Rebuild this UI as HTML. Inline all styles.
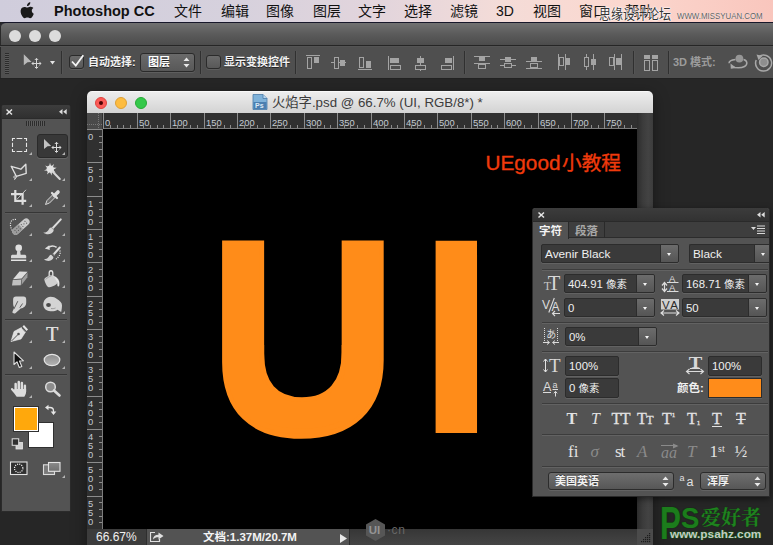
<!DOCTYPE html>
<html lang="zh">
<head>
<meta charset="utf-8">
<title>Photoshop CC</title>
<style>
*{box-sizing:border-box;margin:0;padding:0}
html,body{width:773px;height:545px;overflow:hidden;background:#262626}
body{position:relative;font-family:"Liberation Sans","Noto Sans CJK SC",sans-serif;font-size:12px;color:#fff}
.abs{position:absolute}
#menubar{left:0;top:0;width:773px;height:22px;background:linear-gradient(90deg,#d0cddc 0%,#d6d1dd 30%,#e3d5dc 50%,#f4dcd8 65%,#fbd8cf 80%,#f9c6bd 100%);color:#111;font-size:14px;line-height:22px;white-space:nowrap}
#menubar span{position:absolute;top:0}
#appwin{left:0;top:22px;width:773px;height:523px;background:#262626;overflow:hidden}
#apptitle{left:0;top:0;width:773px;height:24px;background:linear-gradient(#717171,#5b5b5b 50%,#4c4c4c);border-top:1px solid #17172a;border-bottom:1px solid #262626;box-shadow:inset 1px 0 0 #2a2a2a;border-top-left-radius:5px}
.gl{position:absolute;width:12px;height:12px;border-radius:50%;background:#dcdcdc;top:7px}
#optbar{left:0;top:24px;width:773px;height:33px;background:#4f4f4f;border-top:1px solid #545454;border-bottom:1px solid #222;box-shadow:inset 1px 0 0 #2a2a2a}

.sep{position:absolute;width:2px;top:4px;height:23px;border-left:1px solid #303030;border-right:1px solid #555}
.cb{position:absolute;top:8px;width:15px;height:14px;border:1px solid #2b2b2b;border-radius:3px;background:linear-gradient(#6a6a6a,#585858);box-shadow:0 1px 0 #5e5e5e}
.olab{position:absolute;top:0;line-height:31px;font-size:11px;font-weight:bold;color:#f2f2f2;white-space:nowrap;text-shadow:0 1px 0 #222}
.oi{position:absolute;top:0}

#doc{left:87px;top:69px;width:566px;height:460px;background:#000;border-radius:5px 5px 0 0;overflow:hidden;box-shadow:0 4px 16px rgba(0,0,0,.4)}
#doctitle{left:0;top:0;width:566px;height:22px;background:linear-gradient(#ededed,#d3d3d3);border-top:1px solid #f8f8f8;color:#3c3c3c;font-size:13.300px;line-height:21px;white-space:nowrap}
.tl{position:absolute;top:5px;width:12px;height:12px;border-radius:50%}
#hr{left:0;top:22px;width:550px;height:16px;background:#303030;overflow:hidden;font-size:9.400px;line-height:9px;color:#c4cbd3}
#vr{left:0;top:38px;width:16px;height:400px;background:#303030;overflow:hidden;font-size:9.400px;color:#c4cbd3;line-height:9.100px;border-right:1px solid #7c7c7c}
#hr i,#vr i{position:absolute;background:#8c8c8c}
#hr b,#vr b{position:absolute;font-weight:normal}
#hr b{transform:scaleY(1.06);transform-origin:0 90%}
#vscroll{left:550px;top:22px;width:16px;height:416px;background:linear-gradient(90deg,#2c2c2c,#3b3b3b 35%,#434343 70%,#3c3c3c)}
#status{left:0;top:438px;width:550px;height:22px;background:#535353}

#tools{left:1px;top:83px;width:70px;height:407px;background:#535353;border:1px solid #2b2b2b;border-top-color:#3c3c3c;border-radius:3px 3px 0 0;overflow:hidden}
#tools .hd{left:0;top:0;width:68px;height:13px;background:linear-gradient(#3c3c3c,#303030);border-bottom:1px solid #2b2b2b}
#tools .ts{position:absolute;left:3px;width:62px;height:2px;border-top:1px solid #363636;border-bottom:1px solid #5a5a5a}
#tools svg{position:absolute;overflow:visible}
.tri{position:absolute;width:0;height:0;border-left:3px solid transparent;border-bottom:3px solid #b4b4b4}

#chr{left:532px;top:186px;width:238px;height:289px;border-radius:3px 3px 0 0;background:#535353;border:1px solid #2a2a2a;border-top:0;box-shadow:0 2px 6px rgba(0,0,0,.5);font-size:11.400px;color:#f0f0f0;overflow:hidden}
#chr .hd{left:0;top:0;width:236px;height:13px;background:linear-gradient(#3c3c3c,#323232);border-radius:2px 2px 0 0}
#chr .tabs{left:0;top:13px;width:236px;height:17px;background:#3e3e3e;border-top:1px solid #2a2a2a;border-bottom:1px solid #2c2c2c}
#chr .tab{position:absolute;top:0;height:16px;font-size:11.500px;line-height:18px;font-weight:bold;text-align:center;border-right:1px solid #2a2a2a}
#chr .fld{position:absolute;background:#3a3a3a;border:1px solid #2c2c2c;box-shadow:0 1px 0 #626262;line-height:19px;padding-left:3px;white-space:nowrap;overflow:hidden;border-radius:2px}
#chr .btn{position:absolute;right:0;top:0;bottom:0;width:18px;background:linear-gradient(#6c6c6c,#555);border-left:1px solid #2c2c2c}
#chr .btn:after{content:"";position:absolute;left:6px;top:8px;border:2.500px solid transparent;border-top:3.500px solid #f4f4f4;border-bottom:0}
#chr .ln{position:absolute;left:8px;width:226px;height:2px;border-top:1px solid #3c3c3c;border-bottom:1px solid #626262}
#chr svg{position:absolute;overflow:visible}
#chr .pop{position:absolute;height:18px;border:1px solid #2c2c2c;border-radius:3px;background:linear-gradient(#6e6e6e,#575757);box-shadow:0 1px 0 #626262;font-size:11px;font-weight:bold;line-height:16px;padding-left:6px;text-shadow:0 -1px 0 #3a3a3a}
#chr .gly{position:absolute;font-family:"Liberation Serif",serif;color:#e2e2e2;white-space:nowrap;line-height:1}
#chr .cj{font-size:10.500px}
</style>
</head>
<body>
<div id="menubar" class="abs">
<svg class="abs" style="left:20px;top:2px" width="15" height="18" viewBox="0 0 15 18"><path fill="#1a1a1a" d="M10.3 0.3c0.1 1-0.3 1.9-0.9 2.6-0.6 0.7-1.500 1.200-2.400 1.100-0.100-0.900 0.300-1.900 0.900-2.500 0.600-0.700 1.600-1.200 2.400-1.200zM13.400 6.100c-1 0.600-1.600 1.500-1.600 2.700 0 1.400 0.800 2.500 2 3-0.300 0.900-0.700 1.700-1.200 2.400-0.700 1-1.400 2-2.500 2-1.100 0-1.400-0.700-2.700-0.700-1.300 0-1.700 0.700-2.700 0.700-1.100 0-1.900-1.100-2.600-2.100-1.400-2.100-2.100-5.300-0.900-7.300 0.700-1.200 1.900-1.900 3.200-1.900 1.100 0 2 0.700 2.700 0.700 0.700 0 1.800-0.800 3.100-0.800 0.500 0 2.200 0.100 3.200 1.300z"/></svg>
<span style="left:54px;font-weight:bold;font-size:14.5px" id="mPs">Photoshop CC</span>
<span style="left:174px">文件</span><span style="left:221px">编辑</span><span style="left:266px">图像</span><span style="left:313px">图层</span><span style="left:358px">文字</span><span style="left:404px">选择</span><span style="left:450px">滤镜</span><span style="left:496px">3D</span><span style="left:533px">视图</span><span style="left:579px">窗口</span><span style="left:625px">帮助</span>
<span id="wm1" style="left:599px;top:6px;font-size:12px;line-height:18px;color:#333;transform:scaleY(1.12);text-shadow:0 0 1px #fff,0 0 1px #fff,0 0 2px #fff,0 0 2px #fff">思缘设计论坛</span>
<span id="wm2" style="left:677px;top:11px;font-size:8.500px;line-height:11px;color:#5e5e5e;transform:scaleX(0.925);transform-origin:0 50%;text-shadow:0 0 1px #fff">WWW.MISSYUAN.COM</span>
</div>
<div id="appwin" class="abs">
  <div id="apptitle" class="abs"><i class="gl" style="left:9px"></i><i class="gl" style="left:29px"></i><i class="gl" style="left:49px"></i></div>
  <div id="optbar" class="abs">
<i class="abs" style="left:5px;top:6px;width:4px;height:21px;background:repeating-linear-gradient(#2c2c2c 0 1px,#5a5a5a 1px 2px)"></i>
<svg class="oi" style="left:22px;top:6px" width="22" height="18" viewBox="0 0 22 18"><path d="M1.800 1.300V12.200L5.500 9.300L9.600 9Z" fill="#b9b9b9"/><path d="M14.500 5.500v9.500M10 10.500h9M12.800 7l1.700-1.700 1.700 1.700M12.800 13.800l1.700 1.700 1.700-1.700M11.700 8.800l-1.700 1.700 1.700 1.700M17.300 8.800l1.700 1.700-1.700 1.700" stroke="#d6d6d6" stroke-width="1" fill="none"/></svg>
<svg class="oi" style="left:50px;top:14px" width="5" height="4" viewBox="0 0 5 4"><path d="M0 0H5L2.500 3.500Z" fill="#e4e4e4"/></svg>
<i class="sep" style="left:61px"></i>
<i class="cb" style="left:69px"></i>
<svg class="oi" style="left:70px;top:7px" width="15" height="13" viewBox="0 0 15 13"><path d="M2 7.500L5.800 11.500L13.300 1.300" fill="none" stroke="#f4f4f4" stroke-width="1.800"/></svg>
<span class="olab" style="left:88px">自动选择:</span>
<div class="abs" style="left:140px;top:6px;width:55px;height:19px;border:1px solid #2a2a2a;border-radius:3px;background:linear-gradient(#6a6a6a,#585858);box-shadow:0 1px 0 #5e5e5e;font-size:11px;font-weight:bold;line-height:17px;padding-left:7px;text-shadow:0 1px 0 #222">图层
<svg class="abs" style="right:4px;top:3px" width="7" height="11" viewBox="0 0 7 11"><path d="M0.500 4L3.500 0.500L6.500 4ZM0.500 7L3.500 10.500L6.500 7Z" fill="#e8e8e8"/></svg></div>
<i class="sep" style="left:200px"></i>
<i class="cb" style="left:206px"></i>
<span class="olab" style="left:224px">显示变换控件</span>
<i class="sep" style="left:295px"></i>
<svg class="oi" style="left:306px;top:7px" width="16" height="20" viewBox="0 0 16 20" fill="none" stroke="#a4a4a4" stroke-width="1"><path d="M0 1.500H14"/><rect x="1.500" y="3.500" width="4" height="11"/><rect x="8" y="3" width="5" height="6" fill="#a4a4a4" stroke="none"/></svg>
<svg class="oi" style="left:331px;top:7px" width="16" height="20" viewBox="0 0 16 20" fill="none" stroke="#a4a4a4" stroke-width="1"><path d="M0 8.500H15"/><rect x="3.500" y="3.500" width="4" height="11" fill="#4f4f4f"/><rect x="9" y="6" width="5" height="6" fill="#a4a4a4" stroke="none"/></svg>
<svg class="oi" style="left:358px;top:7px" width="16" height="20" viewBox="0 0 16 20" fill="none" stroke="#a4a4a4" stroke-width="1"><path d="M0 15.500H14"/><rect x="1.500" y="3.500" width="4" height="10"/><rect x="8" y="7" width="5" height="7" fill="#a4a4a4" stroke="none"/></svg>
<svg class="oi" style="left:388px;top:7px" width="16" height="20" viewBox="0 0 16 20" fill="none" stroke="#a4a4a4" stroke-width="1"><path d="M0.500 2V16"/><rect x="2" y="4" width="9" height="5" fill="#a4a4a4" stroke="none"/><rect x="2.500" y="11.500" width="10" height="4"/></svg>
<svg class="oi" style="left:414px;top:7px" width="16" height="20" viewBox="0 0 16 20" fill="none" stroke="#a4a4a4" stroke-width="1"><path d="M6.500 2V17"/><rect x="3" y="4" width="7" height="5" fill="#a4a4a4" stroke="none"/><rect x="1.500" y="11.500" width="10" height="4" fill="#4f4f4f"/></svg>
<svg class="oi" style="left:440px;top:7px" width="16" height="20" viewBox="0 0 16 20" fill="none" stroke="#a4a4a4" stroke-width="1"><path d="M13.500 2V16"/><rect x="5" y="4" width="7" height="5" fill="#a4a4a4" stroke="none"/><rect x="1.500" y="11.500" width="10" height="4"/></svg>
<svg class="oi" style="left:474px;top:6px" width="17" height="20" viewBox="0 0 17 20" fill="none" stroke="#a4a4a4" stroke-width="1"><path d="M0 3.500H16M0 10.500H16"/><rect x="5" y="4" width="6" height="4" fill="#a4a4a4" stroke="none"/><rect x="4.500" y="11.500" width="7" height="4"/></svg>
<svg class="oi" style="left:500px;top:6px" width="17" height="20" viewBox="0 0 17 20" fill="none" stroke="#a4a4a4" stroke-width="1"><path d="M0 6.500H16M0 12.500H16"/><rect x="5" y="4" width="6" height="5" fill="#a4a4a4" stroke="none"/><rect x="4.500" y="10.500" width="7" height="4" fill="#4f4f4f"/></svg>
<svg class="oi" style="left:526px;top:6px" width="17" height="20" viewBox="0 0 17 20" fill="none" stroke="#a4a4a4" stroke-width="1"><path d="M0 8.500H16M0 15.500H16"/><rect x="5" y="4" width="6" height="4" fill="#a4a4a4" stroke="none"/><rect x="4.500" y="10.500" width="7" height="4"/></svg>
<svg class="oi" style="left:557px;top:6px" width="16" height="20" viewBox="0 0 16 20" fill="none" stroke="#a4a4a4" stroke-width="1"><path d="M1.500 1V17M8.500 1V17"/><rect x="2.500" y="4.500" width="4" height="8"/><rect x="9" y="5" width="4" height="7" fill="#a4a4a4" stroke="none"/></svg>
<svg class="oi" style="left:583px;top:6px" width="16" height="20" viewBox="0 0 16 20" fill="none" stroke="#a4a4a4" stroke-width="1"><path d="M3.500 1V17M10.500 1V17"/><rect x="1.500" y="4.500" width="4" height="9" fill="#4f4f4f"/><rect x="8" y="6" width="5" height="6" fill="#a4a4a4" stroke="none"/></svg>
<svg class="oi" style="left:609px;top:6px" width="16" height="20" viewBox="0 0 16 20" fill="none" stroke="#a4a4a4" stroke-width="1"><path d="M5.500 1V17M12.500 1V17"/><rect x="0.500" y="4.500" width="4" height="8"/><rect x="7" y="5" width="5" height="7" fill="#a4a4a4" stroke="none"/></svg>
<svg class="oi" style="left:643px;top:6px" width="16" height="20" viewBox="0 0 16 20" fill="none" stroke="#a4a4a4" stroke-width="1"><rect x="1" y="2" width="6" height="4" fill="#a4a4a4" stroke="none"/><rect x="9" y="2" width="6" height="4" fill="#a4a4a4" stroke="none"/><rect x="1.500" y="7.500" width="5" height="10"/><rect x="9.500" y="7.500" width="5" height="10"/></svg>
<i class="sep" style="left:464px"></i>
<i class="sep" style="left:633px"></i>
<i class="sep" style="left:668px"></i>
<span class="olab" style="left:673px;color:#9c9c9c;text-shadow:none">3D 模式:</span>
<svg class="oi" style="left:727px;top:6px" width="22" height="20" viewBox="0 0 22 20" fill="none" stroke="#a8a8a8"><path d="M8.500 6.500C4 7 2 8.500 2 10.200M6 13.800C8 15 14 15.500 17.500 13.500C21 11.500 20.500 7.500 16.500 6.500" stroke-width="1.500"/><path d="M3.500 10.500L9.500 15L3.800 15.800Z" fill="#a8a8a8" stroke="none"/><circle cx="12.400" cy="5.600" r="3.900" fill="#969696" stroke="none"/></svg>
<svg class="oi" style="left:754px;top:5px" width="22" height="22" viewBox="0 0 22 22" fill="none" stroke="#a8a8a8"><path d="M5 4.500A8 8 0 1 1 2.200 8" stroke-width="1.500"/><circle cx="9.800" cy="10.300" r="4.200" stroke-width="1.500" fill="#8e8e8e"/><path d="M2.500 2.500L8.500 4L4.500 8Z" fill="#a8a8a8" stroke="none"/></svg>
</div>
<div id="tools" class="abs"><div class="hd abs">
<svg style="left:4px;top:3px" width="7" height="6" viewBox="0 0 7 6"><path d="M0.500 0.500L6 5.500M6 0.500L0.500 5.500" stroke="#e4e4e4" stroke-width="1.500"/></svg>
<svg style="left:57px;top:3px" width="8" height="6" viewBox="0 0 8 6"><path d="M3.500 0V5.500L0 2.750ZM7.700 0V5.500L4.200 2.750Z" fill="#dcdcdc"/></svg>
</div><i class="abs" style="left:35px;top:28px;width:31px;height:24px;background:#383838;border:1px solid #2a2a2a;border-radius:3px;box-shadow:0 1px 0 #666"></i>
<svg style="left:10px;top:32px" width="15" height="14" viewBox="0 0 15 14"><path d="M0.500 3V0.500H3M4.600 0.500H10.300M12 0.500H14.500V3M14.500 4.800V9M14.500 11V13.500H12M10.300 13.500H4.600M3 13.500H0.500V11M0.500 9V4.800" fill="none" stroke="#e6e6e6" stroke-width="1.100"/></svg>
<svg style="left:41px;top:32px" width="20" height="16" viewBox="0 0 20 16"><path d="M1 1.100V11L4.500 8.300L8.200 8Z" fill="#c2c2c2"/><path d="M13.500 4.500v9.500M9 9.500h9M11.800 6l1.700-1.700 1.700 1.700M11.800 12.800l1.700 1.700 1.700-1.700M10.700 7.800l-1.700 1.700 1.700 1.700M16.300 7.800l1.700 1.700-1.700 1.700" stroke="#dcdcdc" stroke-width="1" fill="none"/></svg>
<svg style="left:7px;top:56px" width="20" height="19" viewBox="9 162 20 19"><path d="M11.200 166.300L20.800 169.200L25.800 164.200L26.200 173.400L16.300 176.300Z" fill="none" stroke="#dedede" stroke-width="1.400" stroke-linejoin="round"/><path d="M16.300 176.300c-1.800-1.200-3.300 0.500-2 1.700 1 0.800 2.300 0 2-1.700zM15.800 177.500l-1.300 2.300" fill="none" stroke="#dedede" stroke-width="1"/></svg>
<svg style="left:40px;top:56px" width="20" height="19" viewBox="42 162 20 19"><path d="M50 162.800l1.100 3.700 3-2.600-1.300 3.600 3.900 0.200-3.400 2 2.400 3.100-3.700-1.300-0.400 3.900-1.700-3.500-3 2.600 1.300-3.700-4.200-0.300 3.700-1.800-2.500-3.100 3.700 1.400z" fill="#e2e2e2"/><circle cx="50.200" cy="169" r="3.600" fill="#e2e2e2"/><path d="M52.500 171.500L59.800 179" stroke="#d6d6d6" stroke-width="2" stroke-linecap="round"/></svg>
<svg style="left:8px;top:83px" width="18" height="17" viewBox="10 189 18 17"><rect x="16.300" y="195.100" width="5.300" height="4.800" fill="#3e3e3e"/><path d="M17 199.300L26 189.800" stroke="#cacaca" stroke-width="1"/><path d="M15.300 190V200.900H26.200M11 194.100H22.600V204.800" fill="none" stroke="#dedede" stroke-width="2.200"/></svg>
<svg style="left:42px;top:83px" width="17" height="17" viewBox="0 0 17 17"><path d="M1.500 15.500L3 11.500L9 5.500L11.500 8L5.500 14Z" fill="#6a6a6a" stroke="#d8d8d8" stroke-width="1"/><path d="M8 4L13 9" stroke="#e0e0e0" stroke-width="2.200" stroke-linecap="round"/><path d="M10.500 6.500L14 3" stroke="#dcdcdc" stroke-width="3.600" stroke-linecap="round"/></svg>
<svg style="left:7px;top:111px" width="22" height="19" viewBox="9 217 22 19"><path d="M16 219.500c-3.500-0.800-6 2-5.500 6 0.300 2.500 1.200 4.500 2.300 5.800" fill="none" stroke="#ececec" stroke-width="1.200" stroke-dasharray="1.100 1.200"/><g transform="rotate(-42 20.900 226.600)"><rect x="10.400" y="223.200" width="21" height="6.800" rx="3.400" fill="#c9c9c9"/><path d="M13.800 223.200h7.100v6.800h-7.100a3.400 3.400 0 0 1 0-6.800z" fill="#9c9c9c"/><g fill="#5a5a5a"><circle cx="14" cy="225.400" r="0.600"/><circle cx="14" cy="227.800" r="0.600"/><circle cx="16.500" cy="225.400" r="0.600"/><circle cx="16.500" cy="227.800" r="0.600"/><circle cx="19" cy="225.400" r="0.600"/><circle cx="19" cy="227.800" r="0.600"/><circle cx="22.500" cy="225.400" r="0.600"/><circle cx="22.500" cy="227.800" r="0.600"/><circle cx="25" cy="226.600" r="0.600"/><circle cx="27.500" cy="225.400" r="0.600"/><circle cx="27.500" cy="227.800" r="0.600"/></g></g></svg>
<svg style="left:40px;top:111px" width="21" height="19" viewBox="42 217 21 19"><path d="M52.600 228.300L60.800 219.400" stroke="#dcdcdc" stroke-width="2" stroke-linecap="round"/><path d="M51.300 227.700l2.300 2.300" stroke="#8a8a8a" stroke-width="1.200"/><path d="M43.300 232.600c3 0 4.500-1.500 5.500-3.200 0.800-1.300 1.700-2 2.300-1.900l2.500 2.500c0.200 1.200-0.800 2.600-2.500 3.600-2.500 1.400-5.800 0.800-7.800-1z" fill="#d2d2d2"/></svg>
<svg style="left:8px;top:138px" width="18" height="18" viewBox="10 244 18 18"><circle cx="18.700" cy="247.900" r="3.300" fill="#e0e0e0"/><path d="M17.300 250h2.800l0.600 5h-4z" fill="#d6d6d6"/><path d="M11 258.300v-2c0-1 0.800-1.500 1.800-1.500h11.600c1 0 1.800 0.500 1.800 1.500v2z" fill="#d8d8d8"/><rect x="11" y="259.500" width="15.200" height="1.500" fill="#e4e4e4"/></svg>
<svg style="left:40px;top:137px" width="21" height="19" viewBox="42 243 21 19"><path d="M54 254L59.800 247.500" stroke="#dcdcdc" stroke-width="2" stroke-linecap="round"/><path d="M52.600 253.600l2 2" stroke="#8a8a8a" stroke-width="1.100"/><path d="M44 259.300c2.600 0 4-1.300 4.900-2.800 0.700-1.200 1.600-1.900 2.300-1.700l2.200 2.200c0.200 1.100-0.700 2.400-2.300 3.300-2.300 1.300-5.300 0.700-7.100-1z" fill="#d2d2d2"/><path d="M48 247.700c2.500-2 6-2.200 8.600-0.300" fill="none" stroke="#dcdcdc" stroke-width="1.500"/><path d="M44.800 248.500L49.300 245.200L49.800 250Z" fill="#dcdcdc"/><path d="M59.800 250.500c1 2.500 0 6-3.800 8.500" fill="none" stroke="#ececec" stroke-width="1.200" stroke-dasharray="1.100 1.200"/></svg>
<svg style="left:9px;top:164px" width="18" height="17" viewBox="11 270 18 17"><path d="M19.500 271.500L27.600 271.800L21.600 278.600L13 279.200Z" fill="#dcdcdc"/><path d="M12.800 280L21.300 279.500L20.800 285.200L12 285.500Z" fill="#c0c0c0"/><path d="M22 279.300L27.600 272.800L27.400 277.300L21.500 285Z" fill="#9e9e9e"/></svg>
<svg style="left:40px;top:163px" width="20" height="19" viewBox="42 269 20 19"><path d="M49.200 278.500V273c0-3 3.600-3 3.600 0v6.500" fill="none" stroke="#e2e2e2" stroke-width="1.300"/><path d="M44.300 279.200c0-1 5-4.500 7-4 2 0.500 6.500 5 6.200 6.500-0.300 1.500-0.500 2-1.500 2.800-1.500 1.300-6 3.200-7.500 2.700-1.500-0.500-4-5.500-4.200-8z" fill="#d0d0d0"/><path d="M52 275.500c3.500 0.500 6.500 3 7.200 6 0.300 1.500 0.300 3.300 0 4.200-0.300 1-1.600 1-1.800-0.200-0.200-1.200 0-2.500-0.300-3.500-0.700-2-2.800-4.500-5.100-6.500z" fill="#e6e6e6"/><path d="M45.500 279.500c1.500-1.500 4-3.200 5.800-3.500" fill="none" stroke="#9a9a9a" stroke-width="0.800"/></svg>
<svg style="left:9px;top:189px" width="18" height="19" viewBox="11 295 18 19"><path d="M16 296.500h7.500c1.800 0 2.700 1 2.700 2.800v3.500c0 3-2.500 5.500-5.500 5.700l-5.300 4.700c-1.200 0.600-3.300 0-3-1.200l1.800-4.800c-0.800-1-1.100-2.500-1.100-4v-3.500c0-2 1-3.200 2.900-3.200z" fill="#d4d4d4"/><path d="M17.800 301.200L13.800 309.200M22.600 303.500L19.800 307.600" stroke="#5e5e5e" stroke-width="1" fill="none"/></svg>
<svg style="left:40px;top:189px" width="21" height="19" viewBox="42 295 21 19"><path d="M43.300 304.500c0-4 3-7.800 7.200-7.800 3 0 4.500 0.800 6.500 2.300 2.500 1.800 5 3.500 5 6.200 0 2-0.300 4.500-0.800 6.800l-3.700-2.300c-2 1.500-5.500 1.800-8.500 1.300-3-0.500-5.700-3-5.700-6.500z" fill="#d4d4d4"/><ellipse cx="48.500" cy="305" rx="2.400" ry="1.900" fill="#4a4a4a"/><path d="M51 308.500c1.500 0.300 3 0.200 4.500-0.500" stroke="#8a8a8a" stroke-width="0.800" fill="none"/></svg>
<svg style="left:8px;top:218px" width="19" height="19" viewBox="0 0 19 19"><path d="M1 17.500L4 7.500L11.500 3.500L15.500 8L11 15Z" fill="#e0e0e0" stroke="#f0f0f0" stroke-width="0.600"/><path d="M1.500 17L8 10.500" stroke="#555" stroke-width="1"/><circle cx="8.500" cy="10" r="1.300" fill="#555"/><path d="M12.500 2.500L14 1L18 5.500L16.500 7Z" fill="#e6e6e6"/><path d="M11.800 3.800L15.300 7.800" stroke="#535353" stroke-width="0.900"/></svg>
<span class="abs" style="left:42px;top:215px;width:16px;text-align:center;font-family:'Liberation Serif',serif;font-size:20px;line-height:22px;color:#dcdcdc;margin-top:1.5px;text-shadow:0.3px 0 0 #dcdcdc">T</span>
<svg style="left:11px;top:245px" width="12" height="18" viewBox="0 0 12 18"><path d="M1 1V13.500L4 10.800L6.300 16.500L8.800 15.500L6.500 10L10.500 9.800Z" fill="#111" stroke="#e0e0e0" stroke-width="1.100" stroke-linejoin="round"/></svg>
<svg style="left:41px;top:247px" width="18" height="14" viewBox="0 0 18 14"><defs><linearGradient id="eg" x1="0" y1="0" x2="0" y2="1"><stop offset="0" stop-color="#8c8c8c"/><stop offset="1" stop-color="#b4b4b4"/></linearGradient></defs><ellipse cx="9" cy="7" rx="7.800" ry="5.600" fill="url(#eg)" stroke="#e4e4e4" stroke-width="1.200"/></svg>
<svg style="left:8px;top:274px" width="19" height="18" viewBox="10 380 19 18"><g fill="#dcdcdc"><rect x="14.400" y="382.800" width="2.500" height="9" rx="1.250"/><rect x="17.500" y="380.800" width="2.500" height="10" rx="1.250"/><rect x="20.600" y="381.800" width="2.500" height="10" rx="1.250"/><rect x="23.700" y="384.500" width="2.400" height="8" rx="1.200"/><path d="M14.400 389h11.700v2.500c0 2.500-1 3.800-1.800 5.200h-7.600c-1.500-2.200-3.500-4.500-5.600-7-0.700-1 0.600-2.300 1.700-1.300l1.600 1.600z"/></g></svg>
<svg style="left:42px;top:275px" width="17" height="16" viewBox="0 0 17 16"><circle cx="6.500" cy="6" r="4.800" fill="#8c8c8c" stroke="#dcdcdc" stroke-width="1.500"/><path d="M10 9.500L15.500 14.500" stroke="#dcdcdc" stroke-width="2.600" stroke-linecap="round"/></svg>
<i class="tri" style="left:27px;top:46px"></i>
<i class="tri" style="left:60px;top:46px"></i>
<i class="tri" style="left:27px;top:72px"></i>
<i class="tri" style="left:60px;top:72px"></i>
<i class="tri" style="left:27px;top:98px"></i>
<i class="tri" style="left:60px;top:98px"></i>
<i class="tri" style="left:27px;top:127px"></i>
<i class="tri" style="left:60px;top:127px"></i>
<i class="tri" style="left:27px;top:153px"></i>
<i class="tri" style="left:60px;top:153px"></i>
<i class="tri" style="left:27px;top:179px"></i>
<i class="tri" style="left:60px;top:179px"></i>
<i class="tri" style="left:27px;top:205px"></i>
<i class="tri" style="left:60px;top:205px"></i>
<i class="tri" style="left:27px;top:234px"></i>
<i class="tri" style="left:27px;top:260px"></i>
<i class="tri" style="left:60px;top:260px"></i>
<i class="tri" style="left:27px;top:289px"></i>
<i class="tri" style="left:60px;top:234px"></i>
<i class="ts" style="top:106px"></i>
<i class="ts" style="top:213px"></i>
<i class="ts" style="top:268px"></i>
<i class="abs" style="left:24px;top:15px;width:19px;height:5px;background:repeating-linear-gradient(90deg,#2c2c2c 0 1px,#5e5e5e 1px 2px)"></i>
<i class="abs" style="left:11px;top:300px;width:26px;height:26px;background:#ffa80c;border:1px solid #303030;box-shadow:inset 0 0 0 1px #fff;z-index:2"></i>
<i class="abs" style="left:26px;top:316px;width:26px;height:26px;background:#fff;border:1px solid #303030;z-index:1"></i>
<svg style="left:42px;top:298px" width="13" height="12" viewBox="44 404 13 12"><path d="M47.500 407.500h2.500c2.500 0 3.500 1.500 3.500 3.500v2" fill="none" stroke="#e6e6e6" stroke-width="1.300"/><path d="M45 407.500L48.500 404.700V410.300ZM53.500 415L50.700 411.500H56.300Z" fill="#e6e6e6"/></svg>
<svg style="left:9px;top:332px" width="12" height="12" viewBox="11 438 12 12"><rect x="16" y="442.500" width="6.500" height="6.500" fill="#d0d0d0" stroke="#e8e8e8" stroke-width="0.800"/><rect x="12.200" y="438.800" width="6.500" height="6.500" fill="#303030" stroke="#e0e0e0" stroke-width="1"/></svg>
<svg style="left:7px;top:355px" width="19" height="15" viewBox="9 461 19 15"><rect x="10.500" y="462" width="16.500" height="12.500" fill="#303030" stroke="#e4e4e4" stroke-width="1.100"/><circle cx="18.700" cy="468.300" r="4.200" fill="none" stroke="#f4f4f4" stroke-width="1.200" stroke-dasharray="1.100 1.100"/></svg>
<svg style="left:40px;top:355px" width="20" height="15" viewBox="42 461 20 15"><defs><linearGradient id="sg" x1="0" y1="0" x2="0" y2="1"><stop offset="0" stop-color="#8a8a8a"/><stop offset="1" stop-color="#707070"/></linearGradient></defs><rect x="43.500" y="464.800" width="11" height="9.700" fill="#7a7a7a" stroke="#dcdcdc" stroke-width="1.100"/><rect x="48.500" y="462.500" width="11.500" height="8.800" fill="url(#sg)" stroke="#e4e4e4" stroke-width="1.100"/></svg>
<i class="tri" style="left:60px;top:369px"></i></div>
<div id="doc" class="abs">
<div id="doctitle" class="abs">
<i class="tl" style="left:8px;background:#fc5b57;border:1px solid #e0443e"></i><i class="abs" style="left:12px;top:9px;width:4px;height:4px;border-radius:50%;background:#4d0000"></i>
<i class="tl" style="left:28px;background:#fdbc40;border:1px solid #dea035"></i>
<i class="tl" style="left:48px;background:#34c84a;border:1px solid #27aa35"></i>
<svg class="abs" style="left:165px;top:2px" width="16" height="16" viewBox="0 0 16 16"><path d="M1 0.500H11L15 4.500V15.500H1Z" fill="#7fb2d9" stroke="#4a7ba8" stroke-width="0.800"/><path d="M11 0.500V4.500H15" fill="#b9d6ee" stroke="#4a7ba8" stroke-width="0.800"/><rect x="1.500" y="8" width="13" height="7" fill="#4b7fb0"/><text x="3" y="14" font-size="7" font-weight="bold" fill="#dbe9f5" font-family="Liberation Sans,sans-serif">Ps</text></svg>
<span class="abs" id="dtitle" style="left:185px;top:0">火焰字.psd @ 66.7% (UI, RGB/8*) *</span>
</div>
<div id="hr" class="abs"><i style="left:16px;top:15px;width:534px;height:1px;background:#7c7c7c"></i><i style="left:0;top:0;width:15px;height:16px;background:#4a4a4a"></i><i style="left:11px;top:0;width:1px;height:15px;background:repeating-linear-gradient(#787878 0 1px,transparent 1px 2px)"></i><i style="left:0;top:11px;width:15px;height:1px;background:repeating-linear-gradient(90deg,#787878 0 1px,transparent 1px 2px)"></i><i style="left:16px;top:0;width:1px;height:16px"></i><b style="left:18px;top:5px">0</b><i style="left:23px;top:12px;width:1px;height:3px"></i><i style="left:30px;top:12px;width:1px;height:3px"></i><i style="left:36px;top:12px;width:1px;height:3px"></i><i style="left:43px;top:12px;width:1px;height:3px"></i><i style="left:50px;top:0;width:1px;height:16px"></i><b style="left:52px;top:5px">50</b><i style="left:56px;top:12px;width:1px;height:3px"></i><i style="left:63px;top:12px;width:1px;height:3px"></i><i style="left:70px;top:12px;width:1px;height:3px"></i><i style="left:76px;top:12px;width:1px;height:3px"></i><i style="left:83px;top:0;width:1px;height:16px"></i><b style="left:85px;top:5px">100</b><i style="left:90px;top:12px;width:1px;height:3px"></i><i style="left:96px;top:12px;width:1px;height:3px"></i><i style="left:103px;top:12px;width:1px;height:3px"></i><i style="left:110px;top:12px;width:1px;height:3px"></i><i style="left:117px;top:0;width:1px;height:16px"></i><b style="left:119px;top:5px">150</b><i style="left:123px;top:12px;width:1px;height:3px"></i><i style="left:130px;top:12px;width:1px;height:3px"></i><i style="left:137px;top:12px;width:1px;height:3px"></i><i style="left:143px;top:12px;width:1px;height:3px"></i><i style="left:150px;top:0;width:1px;height:16px"></i><b style="left:152px;top:5px">200</b><i style="left:157px;top:12px;width:1px;height:3px"></i><i style="left:163px;top:12px;width:1px;height:3px"></i><i style="left:170px;top:12px;width:1px;height:3px"></i><i style="left:177px;top:12px;width:1px;height:3px"></i><i style="left:183px;top:0;width:1px;height:16px"></i><b style="left:185px;top:5px">250</b><i style="left:190px;top:12px;width:1px;height:3px"></i><i style="left:197px;top:12px;width:1px;height:3px"></i><i style="left:203px;top:12px;width:1px;height:3px"></i><i style="left:210px;top:12px;width:1px;height:3px"></i><i style="left:217px;top:0;width:1px;height:16px"></i><b style="left:219px;top:5px">300</b><i style="left:223px;top:12px;width:1px;height:3px"></i><i style="left:230px;top:12px;width:1px;height:3px"></i><i style="left:237px;top:12px;width:1px;height:3px"></i><i style="left:243px;top:12px;width:1px;height:3px"></i><i style="left:250px;top:0;width:1px;height:16px"></i><b style="left:252px;top:5px">350</b><i style="left:257px;top:12px;width:1px;height:3px"></i><i style="left:263px;top:12px;width:1px;height:3px"></i><i style="left:270px;top:12px;width:1px;height:3px"></i><i style="left:277px;top:12px;width:1px;height:3px"></i><i style="left:284px;top:0;width:1px;height:16px"></i><b style="left:286px;top:5px">400</b><i style="left:290px;top:12px;width:1px;height:3px"></i><i style="left:297px;top:12px;width:1px;height:3px"></i><i style="left:304px;top:12px;width:1px;height:3px"></i><i style="left:310px;top:12px;width:1px;height:3px"></i><i style="left:317px;top:0;width:1px;height:16px"></i><b style="left:319px;top:5px">450</b><i style="left:324px;top:12px;width:1px;height:3px"></i><i style="left:330px;top:12px;width:1px;height:3px"></i><i style="left:337px;top:12px;width:1px;height:3px"></i><i style="left:344px;top:12px;width:1px;height:3px"></i><i style="left:350px;top:0;width:1px;height:16px"></i><b style="left:352px;top:5px">500</b><i style="left:357px;top:12px;width:1px;height:3px"></i><i style="left:364px;top:12px;width:1px;height:3px"></i><i style="left:370px;top:12px;width:1px;height:3px"></i><i style="left:377px;top:12px;width:1px;height:3px"></i><i style="left:384px;top:0;width:1px;height:16px"></i><b style="left:386px;top:5px">550</b><i style="left:390px;top:12px;width:1px;height:3px"></i><i style="left:397px;top:12px;width:1px;height:3px"></i><i style="left:404px;top:12px;width:1px;height:3px"></i><i style="left:410px;top:12px;width:1px;height:3px"></i><i style="left:417px;top:0;width:1px;height:16px"></i><b style="left:419px;top:5px">600</b><i style="left:424px;top:12px;width:1px;height:3px"></i><i style="left:431px;top:12px;width:1px;height:3px"></i><i style="left:437px;top:12px;width:1px;height:3px"></i><i style="left:444px;top:12px;width:1px;height:3px"></i><i style="left:451px;top:0;width:1px;height:16px"></i><b style="left:453px;top:5px">650</b><i style="left:457px;top:12px;width:1px;height:3px"></i><i style="left:464px;top:12px;width:1px;height:3px"></i><i style="left:471px;top:12px;width:1px;height:3px"></i><i style="left:477px;top:12px;width:1px;height:3px"></i><i style="left:484px;top:0;width:1px;height:16px"></i><b style="left:486px;top:5px">700</b><i style="left:491px;top:12px;width:1px;height:3px"></i><i style="left:497px;top:12px;width:1px;height:3px"></i><i style="left:504px;top:12px;width:1px;height:3px"></i><i style="left:511px;top:12px;width:1px;height:3px"></i><i style="left:517px;top:0;width:1px;height:16px"></i><b style="left:519px;top:5px">750</b><i style="left:524px;top:12px;width:1px;height:3px"></i><i style="left:531px;top:12px;width:1px;height:3px"></i><i style="left:537px;top:12px;width:1px;height:3px"></i><i style="left:544px;top:12px;width:1px;height:3px"></i></div>
<div id="vr" class="abs"><i style="top:0px;left:0;height:1px;width:16px"></i><b style="top:3px;left:1px">0</b><i style="top:7px;left:12px;height:1px;width:3px"></i><i style="top:13px;left:12px;height:1px;width:3px"></i><i style="top:20px;left:12px;height:1px;width:3px"></i><i style="top:27px;left:12px;height:1px;width:3px"></i><i style="top:33px;left:0;height:1px;width:16px"></i><b style="top:36px;left:1px">5<br>0</b><i style="top:40px;left:12px;height:1px;width:3px"></i><i style="top:47px;left:12px;height:1px;width:3px"></i><i style="top:53px;left:12px;height:1px;width:3px"></i><i style="top:60px;left:12px;height:1px;width:3px"></i><i style="top:67px;left:0;height:1px;width:16px"></i><b style="top:70px;left:1px">1<br>0<br>0</b><i style="top:73px;left:12px;height:1px;width:3px"></i><i style="top:80px;left:12px;height:1px;width:3px"></i><i style="top:87px;left:12px;height:1px;width:3px"></i><i style="top:93px;left:12px;height:1px;width:3px"></i><i style="top:100px;left:0;height:1px;width:16px"></i><b style="top:103px;left:1px">1<br>5<br>0</b><i style="top:107px;left:12px;height:1px;width:3px"></i><i style="top:113px;left:12px;height:1px;width:3px"></i><i style="top:120px;left:12px;height:1px;width:3px"></i><i style="top:127px;left:12px;height:1px;width:3px"></i><i style="top:133px;left:0;height:1px;width:16px"></i><b style="top:136px;left:1px">2<br>0<br>0</b><i style="top:140px;left:12px;height:1px;width:3px"></i><i style="top:147px;left:12px;height:1px;width:3px"></i><i style="top:153px;left:12px;height:1px;width:3px"></i><i style="top:160px;left:12px;height:1px;width:3px"></i><i style="top:167px;left:0;height:1px;width:16px"></i><b style="top:170px;left:1px">2<br>5<br>0</b><i style="top:173px;left:12px;height:1px;width:3px"></i><i style="top:180px;left:12px;height:1px;width:3px"></i><i style="top:187px;left:12px;height:1px;width:3px"></i><i style="top:193px;left:12px;height:1px;width:3px"></i><i style="top:200px;left:0;height:1px;width:16px"></i><b style="top:203px;left:1px">3<br>0<br>0</b><i style="top:207px;left:12px;height:1px;width:3px"></i><i style="top:213px;left:12px;height:1px;width:3px"></i><i style="top:220px;left:12px;height:1px;width:3px"></i><i style="top:227px;left:12px;height:1px;width:3px"></i><i style="top:233px;left:0;height:1px;width:16px"></i><b style="top:236px;left:1px">3<br>5<br>0</b><i style="top:240px;left:12px;height:1px;width:3px"></i><i style="top:247px;left:12px;height:1px;width:3px"></i><i style="top:253px;left:12px;height:1px;width:3px"></i><i style="top:260px;left:12px;height:1px;width:3px"></i><i style="top:267px;left:0;height:1px;width:16px"></i><b style="top:270px;left:1px">4<br>0<br>0</b><i style="top:273px;left:12px;height:1px;width:3px"></i><i style="top:280px;left:12px;height:1px;width:3px"></i><i style="top:287px;left:12px;height:1px;width:3px"></i><i style="top:293px;left:12px;height:1px;width:3px"></i><i style="top:300px;left:0;height:1px;width:16px"></i><b style="top:303px;left:1px">4<br>5<br>0</b><i style="top:307px;left:12px;height:1px;width:3px"></i><i style="top:313px;left:12px;height:1px;width:3px"></i><i style="top:320px;left:12px;height:1px;width:3px"></i><i style="top:327px;left:12px;height:1px;width:3px"></i><i style="top:333px;left:0;height:1px;width:16px"></i><b style="top:336px;left:1px">5<br>0<br>0</b><i style="top:340px;left:12px;height:1px;width:3px"></i><i style="top:347px;left:12px;height:1px;width:3px"></i><i style="top:353px;left:12px;height:1px;width:3px"></i><i style="top:360px;left:12px;height:1px;width:3px"></i><i style="top:367px;left:0;height:1px;width:16px"></i><b style="top:370px;left:1px">5<br>5<br>0</b><i style="top:373px;left:12px;height:1px;width:3px"></i><i style="top:380px;left:12px;height:1px;width:3px"></i><i style="top:387px;left:12px;height:1px;width:3px"></i><i style="top:393px;left:12px;height:1px;width:3px"></i></div>
<svg class="abs" id="cv" style="left:16px;top:38px" width="534" height="400" viewBox="103 129 534 400">
<g font-family="Liberation Sans,sans-serif" font-weight="bold" font-size="272.900" fill="#ff8c19" stroke="#ff8c19" stroke-width="4.600">
<text transform="scale(0.9434,1)"><tspan x="221.100" y="433.700" font-size="277.300">U</tspan><tspan x="445.800" y="430.700">I</tspan></text>
<clipPath id="ub"><rect x="264" y="345" width="78" height="85"/></clipPath><g clip-path="url(#ub)"><text transform="scale(0.9434,1)" x="221.100" y="428.200" font-size="277.300">U</text></g>
</g>
<g font-family="Liberation Sans,Noto Sans CJK SC,sans-serif" fill="#f03a0c" stroke="#f03a0c" stroke-width="0.350"><text y="169.700"><tspan x="485.500" font-size="20.500" textLength="75" lengthAdjust="spacingAndGlyphs">UEgood</tspan><tspan x="562" font-size="19.300" textLength="59" lengthAdjust="spacingAndGlyphs">小教程</tspan></text></g>
</svg>
<div id="vscroll" class="abs"></div>
<div class="abs" style="left:550px;top:438px;width:16px;height:22px;background:#4b4b4b;border-bottom-right-radius:3px"><svg class="abs" style="left:1px;top:1px" width="14" height="14" viewBox="0 0 14 14" fill="#1c1c1c"><rect x="11" y="3" width="1.200" height="1.200"/><rect x="11" y="5" width="1.200" height="1.200"/><rect x="9" y="5" width="1.200" height="1.200"/><rect x="11" y="7" width="1.200" height="1.200"/><rect x="9" y="7" width="1.200" height="1.200"/><rect x="7" y="7" width="1.200" height="1.200"/><rect x="11" y="9" width="1.200" height="1.200"/><rect x="9" y="9" width="1.200" height="1.200"/><rect x="7" y="9" width="1.200" height="1.200"/><rect x="5" y="9" width="1.200" height="1.200"/><rect x="11" y="11" width="1.200" height="1.200"/><rect x="9" y="11" width="1.200" height="1.200"/><rect x="7" y="11" width="1.200" height="1.200"/><rect x="5" y="11" width="1.200" height="1.200"/><rect x="3" y="11" width="1.200" height="1.200"/></svg></div>
<div id="status" class="abs">
<div class="abs" style="left:0;top:0;width:60px;height:22px;background:#3c3c3c;border-right:1px solid #2e2e2e;font-size:12px;line-height:16px;padding-left:9px;color:#f0f0f0">66.67%</div>
<svg class="abs" style="left:63px;top:3px" width="14" height="10" viewBox="0 0 14 10"><path d="M5 0.500H0.500V9.500H9.500V7" fill="none" stroke="#e0e0e0" stroke-width="1.200"/><path d="M3 7.500C3 4.500 5 2.800 8.500 2.800V0.500L13.500 4L8.500 7.500V5.200C6 5.200 4.500 5.800 3 7.500Z" fill="#e0e0e0"/></svg>
<span class="abs" style="left:116px;top:0;font-size:11.500px;font-weight:bold;line-height:16px;color:#f4f4f4;white-space:nowrap">文档:1.37M/20.7M</span>
<svg class="abs" style="left:253px;top:5px" width="7" height="9" viewBox="0 0 7 9"><path d="M0 0L7 4.500L0 9Z" fill="#e8e8e8"/></svg>
<div class="abs" style="left:262px;top:0;width:288px;height:22px;background:linear-gradient(#363636,#424242 60%,#484848);border-left:1px solid #2a2a2a"></div>
</div>
</div>
<svg class="abs" id="uicn" style="left:365px;top:496px" width="42" height="24" viewBox="0 0 42 24"><path d="M10.500 1L20 6.500V17.500L10.500 23L1 17.500V6.500Z" fill="#565656"/><text x="3.800" y="16.200" font-family="Liberation Sans,sans-serif" font-weight="bold" font-size="11.500" fill="#949494">UI</text><text x="22" y="16" font-family="Liberation Sans,sans-serif" font-size="12" letter-spacing="0.600" fill="#666">·cn</text></svg>
<div class="abs" id="pswm" style="left:660px;top:482px;width:113px;height:42px">
<span class="abs" style="left:0;top:0;white-space:nowrap"><span class="abs" style="left:0;top:-4px;font-weight:bold;font-size:46px;line-height:46px;color:#1c7c1c;transform:scaleX(0.68);transform-origin:0 0;text-shadow:0 0 1px #0a3c0a,0 0 1px #0a3c0a">P</span><span class="abs" style="left:20.500px;top:-2px;font-weight:bold;font-size:29px;line-height:32px;color:#1c7c1c;transform:scaleX(0.95);transform-origin:0 0;text-shadow:0 0 1px #0a3c0a,0 0 1px #0a3c0a">S</span></span>
<span class="abs" style="left:41px;top:0px;font-family:'Noto Serif CJK SC','Noto Sans CJK SC',serif;font-weight:bold;font-size:20px;line-height:26px;color:#1f821f;white-space:nowrap;text-shadow:0 0 1px #0a3c0a">爱好者</span>
<span class="abs" id="www" style="left:10px;top:22.500px;font-size:11.800px;font-weight:bold;line-height:14px;color:#c4c8c4;white-space:nowrap;text-shadow:0 0 1px #146414,0 0 1px #146414,0 0 2px #146414">www.psahz.com</span>
</div>
<div id="chr" class="abs"><div class="hd abs">
<svg style="left:5px;top:4px" width="7" height="6" viewBox="0 0 7 6"><path d="M0.500 0.500L6 5.500M6 0.500L0.500 5.500" stroke="#e4e4e4" stroke-width="1.500"/></svg>
<svg style="left:224px;top:4px" width="8" height="6" viewBox="0 0 8 6"><path d="M3.500 0V5.500L0 2.750ZM7.700 0V5.500L4.200 2.750Z" fill="#dcdcdc"/></svg>
</div>
<div class="tabs abs"><span class="tab" style="left:0;width:36px;background:#535353;height:17px;color:#f4f4f4">字符</span><span class="tab" style="left:36px;width:36px;color:#a8a8a8">段落</span>
<svg style="left:218px;top:3px" width="14" height="9" viewBox="0 0 14 9"><path d="M0 2H5L2.500 5Z" fill="#d8d8d8"/><path d="M6 1H14M6 3.500H14M6 6H14M6 8.500H14" stroke="#d8d8d8" stroke-width="1"/></svg>
</div>
<div class="abs" style="left:1px;top:1px">
<div class="fld" style="left:7px;top:35px;width:138px;height:19px;font-size:11.800px;line-height:19px">Avenir Black<i class=btn></i></div>
<div class="fld" style="left:155px;top:35px;width:84.500px;height:19px;font-size:11.800px;line-height:19px;border-right:0;border-radius:2px 0 0 2px">Black<i class=btn style="width:20px"></i></div>
<i class="ln" style="top:60px"></i>
<div class="fld" style="left:30px;top:65px;width:91px;height:19px;">404.91 <span class="cj">像素</span><i class=btn></i></div>
<div class="fld" style="left:148px;top:65px;width:85px;height:19px;">168.71 <span class="cj">像素</span><i class=btn></i></div>
<div class="fld" style="left:30px;top:89px;width:91px;height:19px;">0<i class=btn></i></div>
<div class="fld" style="left:148px;top:89px;width:85px;height:19px;">50<i class=btn></i></div>
<i class="ln" style="top:113px"></i>
<div class="fld" style="left:31px;top:118px;width:92px;height:19px;">0%<i class=btn></i></div>
<i class="ln" style="top:142px"></i>
<div class="fld" style="left:31px;top:147px;width:54px;height:20px;line-height:18px">100%</div>
<div class="fld" style="left:31px;top:169px;width:54px;height:20px;line-height:18px">0 <span class="cj">像素</span></div>
<div class="fld" style="left:174px;top:147px;width:54px;height:20px;line-height:18px">100%</div>
<i class="abs" style="left:174px;top:169px;width:54px;height:20px;background:#ff8c1a;border:1px solid #2c2c2c;box-shadow:0 1px 0 #626262"></i>
<span class="abs" style="left:143px;top:170px;font-size:11.500px;font-weight:bold;line-height:18px;white-space:nowrap">颜色:</span>
<i class="ln" style="top:194px"></i>
<i class="ln" style="top:225px"></i>
<i class="ln" style="top:257px"></i>
<span class="gly" style="left:9.700px;top:71px;font-size:12px;color:#c4c4c4">T</span>
<span class="gly" style="left:13.800px;top:63.700px;font-size:20.600px;color:#d8d8d8">T</span>
<svg style="left:127px;top:65px" width="18" height="18" viewBox="0 0 18 18"><path d="M3.500 9V17M1 11.500L3.500 8.500L6 11.500M1 14.500L3.500 17.500L6 14.500" fill="none" stroke="#dcdcdc" stroke-width="1.200"/><path d="M6 8.500H17.500M6 17.500H17.500" stroke="#dcdcdc" stroke-width="1"/><text x="8" y="7.800" font-size="9.500" font-family="Liberation Sans,sans-serif" fill="#dcdcdc">A</text><text x="8" y="16.800" font-size="9.500" font-family="Liberation Sans,sans-serif" fill="#dcdcdc">A</text></svg>
<svg style="left:8px;top:88px" width="19" height="19" viewBox="0 0 19 19"><text x="0" y="12" font-size="12" font-family="Liberation Sans,sans-serif" fill="#dcdcdc">V</text><text x="9.500" y="14" font-size="12" font-family="Liberation Sans,sans-serif" fill="#dcdcdc">A</text><path d="M6.800 15.500L12.300 1" stroke="#dcdcdc" stroke-width="1.100"/><path d="M10.500 16.500H18M13 14L10.500 16.500L13 19" fill="none" stroke="#dcdcdc" stroke-width="1.100"/></svg>
<svg style="left:126px;top:90px" width="20" height="17" viewBox="0 0 20 17"><rect x="1" y="0" width="18" height="10.500" fill="#cfcfcf"/><text x="2" y="9.500" font-size="11.500" font-family="Liberation Sans,sans-serif" fill="#2a2a2a" textLength="16">VA</text><path d="M1 14H19M4 11.500L1 14L4 16.500M16 11.500L19 14L16 16.500" fill="none" stroke="#e0e0e0" stroke-width="1.100"/></svg>
<svg style="left:9px;top:119px" width="17" height="18" viewBox="0 0 17 18"><path d="M1.500 0V13M14.500 0V13" stroke="#d8d8d8" stroke-width="1" stroke-dasharray="1 1"/><text x="3.200" y="10" font-size="10" font-family="Noto Sans CJK JP,sans-serif" fill="#dcdcdc">あ</text><path d="M0 14.500H6M10 14.500H16M4 12.500L6.500 14.500L4 16.500M12 12.500L9.500 14.500L12 16.500" fill="none" stroke="#dcdcdc" stroke-width="1"/></svg>
<svg style="left:9px;top:148px" width="7" height="17" viewBox="0 0 7 17"><path d="M2.500 2V15M0.500 4.500L2.500 2L4.500 4.500M0.500 12.500L2.500 15L4.500 12.500" fill="none" stroke="#e4e4e4" stroke-width="1"/></svg>
<span class="gly" style="left:15px;top:146.5px;font-size:19px;color:#d8d8d8">T</span>
<svg style="left:9px;top:171px" width="17" height="17" viewBox="0 0 17 17"><text x="0" y="11" font-size="12.500" font-family="Liberation Sans,sans-serif" fill="#dcdcdc">A</text><text x="9.500" y="7.500" font-size="9" font-family="Liberation Sans,sans-serif" fill="#dcdcdc">a</text><path d="M0 12.500H8M9.500 9.500H15" stroke="#dcdcdc" stroke-width="1"/><path d="M12.500 16.500V11.500M10.800 13.300L12.500 11.300L14.200 13.300" fill="none" stroke="#dcdcdc" stroke-width="1"/></svg>
<span class="gly" style="left:155.500px;top:145.800px;font-size:16.300px;color:#d8d8d8;font-weight:bold;transform:scaleX(1.25);transform-origin:50% 50%">T</span>
<svg style="left:152px;top:159px" width="18" height="6" viewBox="0 0 18 6"><path d="M4 0.500H14" stroke="#dcdcdc" stroke-width="1"/><path d="M1 3.500H17M3.500 1L0.500 3.500L3.500 6M14.500 1L17.500 3.500L14.500 6" fill="none" stroke="#dcdcdc" stroke-width="1.100"/></svg>
<span class="gly" style="left:32.5px;top:201.5px;font-size:16px;font-weight:bold">T</span>
<span class="gly" style="left:57px;top:201.5px;font-size:16px;font-style:italic">T</span>
<span class="gly" style="left:77.5px;top:201.5px;font-size:16px;-webkit-text-stroke:0.300px #e2e2e2;letter-spacing:-0.5px">TT</span>
<span class="gly" style="left:103px;top:201.5px;font-size:16px;-webkit-text-stroke:0.300px #e2e2e2;letter-spacing:-0.5px">T<span style="font-size:12px">T</span></span>
<span class="gly" style="left:128px;top:201.5px;font-size:16px;-webkit-text-stroke:0.300px #e2e2e2;">T<span style="font-size:7px;vertical-align:7px">1</span></span>
<span class="gly" style="left:153px;top:201.5px;font-size:16px;-webkit-text-stroke:0.300px #e2e2e2;">T<span style="font-size:7px;vertical-align:-1px">1</span></span>
<span class="gly" style="left:178px;top:201.5px;font-size:16px;-webkit-text-stroke:0.300px #e2e2e2;border-bottom:1px solid #e2e2e2;padding-bottom:0;height:16px">T</span>
<span class="gly" style="left:202px;top:201.5px;font-size:16px;-webkit-text-stroke:0.300px #e2e2e2;text-decoration:line-through;text-decoration-thickness:1px">T</span>
<span class="gly" style="left:34px;top:233.700px;font-size:17px;">fi</span>
<span class="gly" style="left:56.5px;top:233.700px;font-size:17px;color:#8a8a8a"><i>&#963;</i></span>
<span class="gly" style="left:81px;top:233.700px;font-size:17px;letter-spacing:-1px">st</span>
<span class="gly" style="left:103px;top:233.700px;font-size:17px;color:#8a8a8a"><i>A</i></span>
<span class="gly" style="left:127px;top:236px;font-size:16px;color:#8a8a8a;border-top:1px solid #8a8a8a;padding-top:0;line-height:13px"><i>aa</i></span><svg style="left:138.500px;top:233.500px" width="6" height="6" viewBox="0 0 6 6"><path d="M0 0.500L5.500 3L0 5.500Z" fill="#8a8a8a"/></svg>
<span class="gly" style="left:153px;top:233.700px;font-size:17px;color:#8a8a8a"><i>T</i></span>
<span class="gly" style="left:175.5px;top:233.700px;font-size:17px;">1<span style="font-size:10px;vertical-align:5.500px">st</span></span>
<span class="gly" style="left:200.5px;top:233.700px;font-size:17px;">&#189;</span>
<div class="pop" style="left:14px;top:263px;width:126px">美国英语<svg style="right:4px;top:3px" width="7" height="11" viewBox="0 0 7 11"><path d="M0.500 4L3.500 0.500L6.500 4ZM0.500 7L3.500 10.500L6.500 7Z" fill="#e8e8e8"/></svg></div>
<div class="pop" style="left:166px;top:263px;width:66px">浑厚<svg style="right:4px;top:3px" width="7" height="11" viewBox="0 0 7 11"><path d="M0.500 4L3.500 0.500L6.500 4ZM0.500 7L3.500 10.500L6.500 7Z" fill="#e8e8e8"/></svg></div>
<span class="abs" style="left:145.500px;top:262.500px;font-size:9px;line-height:12px;color:#e0e0e0">a</span><span class="abs" style="left:152.500px;top:264.500px;font-size:12.500px;line-height:16px;color:#e0e0e0">a</span></div></div>
</div>
</body>
</html>
